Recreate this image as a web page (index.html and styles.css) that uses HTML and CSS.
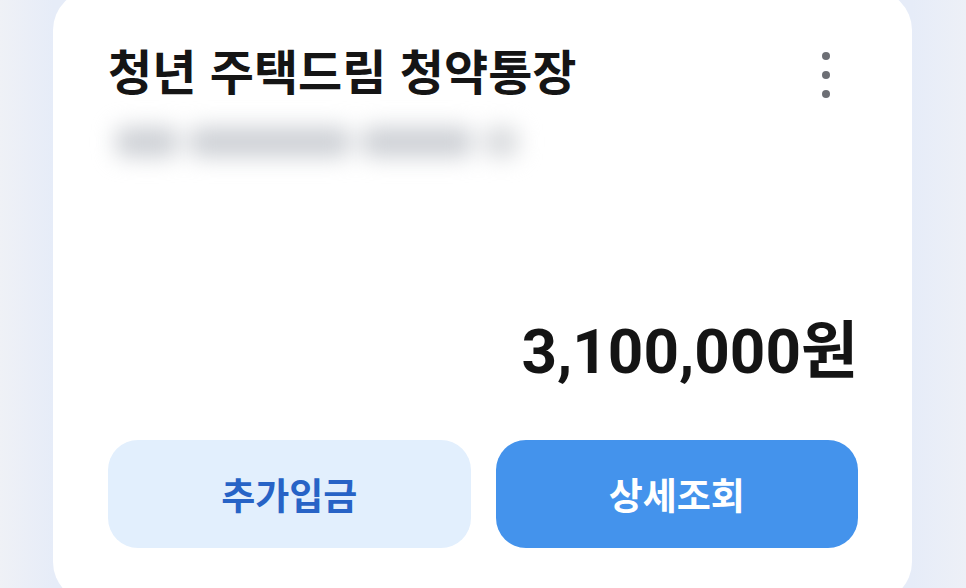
FILE: index.html
```
<!DOCTYPE html>
<html lang="ko">
<head>
    <meta charset="UTF-8">
    <meta name="viewport" content="width=device-width, initial-scale=1.0">
    <title>청약통장</title>
    <link rel="stylesheet" href="styles.css">
</head>
<body>

    <div class="account-card">
        <!-- header -->
        <div class="card-head">
            <div class="account-name">청년 주택드림 청약통장</div>
            <button class="more-btn" aria-label="더보기">
                <span class="dot"></span>
                <span class="dot"></span>
                <span class="dot"></span>
            </button>
        </div>

        <!-- account number (masked) -->
        <div class="account-no">
            <span class="blur-bit w-short"></span>
            <span class="blur-bit w-long"></span>
            <span class="blur-bit w-mid"></span>
            <span class="blur-bit w-tiny"></span>
        </div>

        <div class="balance">3,100,000원</div>

        <div class="actions">
            <button class="btn btn-light">추가입금</button>
            <button class="btn btn-primary">상세조회</button>
        </div>
    </div>

</body>
</html>
```

FILE: styles.css
```
body {
    margin: 0;
    height: 588px;
    overflow: hidden;
    font-family: "Noto Sans CJK KR", "Noto Sans", sans-serif;
    background: linear-gradient(90deg, #eff1f6 0px, #e6ecf8 53px, #e6ecf8 912px, #edf0f7 966px);
}

.account-card {
    box-sizing: border-box;
    width: 859px;
    height: 612px;
    margin: -10px 0 0 53px;
    padding: 47px 54px 54px 55px;
    background: #fff;
    border-radius: 40px;
    display: flex;
    flex-direction: column;
}

.card-head {
    display: flex;
    justify-content: space-between;
    align-items: flex-start;
}

.account-name {
    font-size: 48px;
    font-weight: 700;
    line-height: 64px;
    color: #151515;
}

.more-btn {
    border: 0;
    background: none;
    padding: 0;
    margin: 15px 28px 0 0;
    display: flex;
    flex-direction: column;
    gap: 11px;
    cursor: pointer;
}
.more-btn .dot {
    width: 8px;
    height: 8px;
    border-radius: 50%;
    background: #6d6f75;
}

.account-no {
    display: flex;
    gap: 12px;
    margin-top: 16px;
    height: 50px;
    align-items: center;
    filter: blur(11px);
    padding-left: 8px;
}
.blur-bit {
    height: 30px;
    background: #cdd0d5;
    border-radius: 8px;
}
.w-short { width: 62px; }
.w-long { width: 160px; }
.w-mid { width: 110px; }
.w-tiny { width: 34px; background: #d8dadd; }

.balance {
    margin-top: auto;
    text-align: right;
    font-family: Roboto, "Noto Sans CJK KR", sans-serif;
    font-size: 62px;
    font-weight: 700;
    line-height: 72px;
    color: #141414;
}

.actions {
    display: flex;
    gap: 25px;
    margin-top: 52px;
}

.btn {
    flex: 1;
    height: 108px;
    border: 0;
    border-radius: 30px;
    font-family: "Noto Sans CJK KR", sans-serif;
    font-size: 37px;
    font-weight: 600;
    cursor: pointer;
}
.btn-light { background: #e2effd; color: #2763c6; }
.btn-primary { background: #4493ec; color: #fff; }
```
